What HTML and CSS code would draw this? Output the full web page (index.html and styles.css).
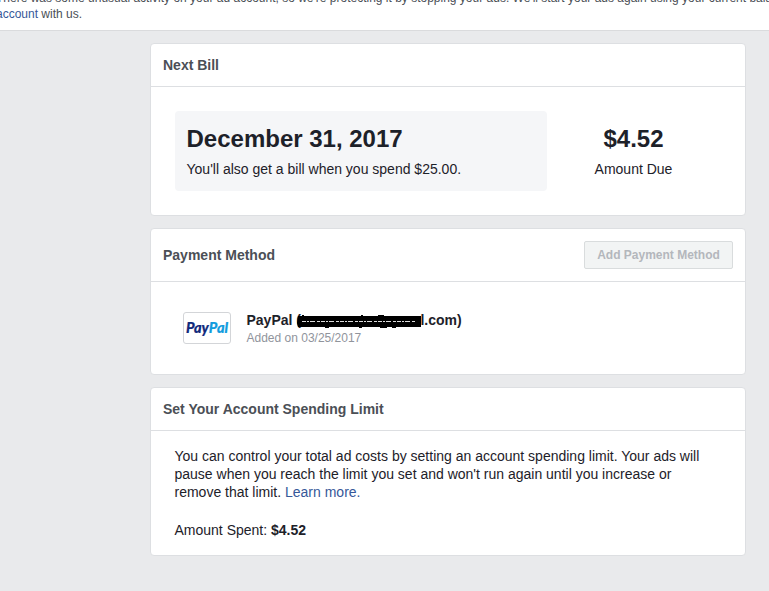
FILE: index.html
```html
<!DOCTYPE html>
<html lang="en">
<head>
    <meta charset="UTF-8">
    <meta name="viewport" content="width=device-width, initial-scale=1.0">
    <title>Billing</title>
    <link rel="stylesheet" href="styles.css">
</head>
<body>
    <div class="notice">
        <p>There was some unusual activity on your ad account, so we're protecting it by stopping your ads. We'll start your ads again using your current balance<br><a href="#">account</a> with us.</p>
    </div>

    <main class="billing">
        <section class="card">
            <header class="card-header">
                <h2>Next Bill</h2>
            </header>
            <div class="card-body bill">
                <div class="bill-date">
                    <div class="big">December 31, 2017</div>
                    <div class="small">You'll also get a bill when you spend $25.00.</div>
                </div>
                <div class="bill-amount">
                    <div class="big">$4.52</div>
                    <div class="small">Amount Due</div>
                </div>
            </div>
        </section>

        <section class="card">
            <header class="card-header with-button">
                <h2>Payment Method</h2>
                <button type="button" disabled>Add Payment Method</button>
            </header>
            <div class="card-body method">
                <div class="paypal-logo"><span class="pay">Pay</span><span class="pal">Pal</span></div>
                <div class="method-info">
                    <div class="method-name">
                        <span>PayPal (</span>
                        <svg class="redacted" width="124" height="14" viewBox="0 0 124 14">
                            <path d="M1 2H124V13H1L0 9Z" fill="#000"/>
                            <path d="M28 13.5h4M62 13.5h3M83 13.5h7M95 13.5h4M5 1.5h2M64 1.5h2M81 1.5h6" stroke="#000" stroke-width="1"/>
                            <path d="M5 7.5H119" stroke="#ddd" stroke-width="1" stroke-dasharray="4 1 2 1 5 2 3 1"/>
                        </svg>
                        <span>l.com)</span>
                    </div>
                    <div class="method-added">Added on 03/25/2017</div>
                </div>
            </div>
        </section>

        <section class="card">
            <header class="card-header">
                <h2>Set Your Account Spending Limit</h2>
            </header>
            <div class="card-body limit">
                <p>You can control your total ad costs by setting an account spending limit. Your ads will pause when you reach the limit you set and won't run again until you increase or remove that limit. <a href="#">Learn more.</a></p>
                <p>Amount Spent: <strong>$4.52</strong></p>
            </div>
        </section>
    </main>
</body>
</html>
```

FILE: styles.css
```css
* {
    box-sizing: border-box;
}

body {
    margin: 0;
    height: 591px;
    overflow: hidden;
    background-color: #e9eaec;
    color: #1d2129;
    font-family: "Liberation Sans", Arial, sans-serif;
    font-size: 14px;
    line-height: 18px;
}

h2,
p {
    margin: 0;
}

a {
    color: #365899;
    text-decoration: none;
}

.notice {
    display: flex;
    align-items: flex-end;
    height: 31px;
    padding-bottom: 8px;
    background-color: #fff;
    border-bottom: 1px solid #dadbdd;
    color: #4b4f56;
    font-size: 12px;
    line-height: 16px;
    white-space: nowrap;
    overflow: hidden;
}

.notice p {
    margin-left: -4px;
}

.billing {
    display: flex;
    flex-direction: column;
    gap: 12px;
    width: 596px;
    margin: 12px 0 0 150px;
}

.card {
    background-color: #fff;
    border: 1px solid #dddfe2;
    border-radius: 4px;
}

.card-header {
    display: flex;
    align-items: center;
    justify-content: space-between;
    height: 43px;
    padding: 0 12px;
    border-bottom: 1px solid #dddfe2;
}

.card-header.with-button {
    height: 53px;
}

.card-header h2 {
    color: #4b4f56;
    font-size: 14px;
    line-height: 18px;
}

button {
    width: 149px;
    height: 28px;
    padding: 0;
    background-color: #f2f4f4;
    border: 1px solid #d9dcdd;
    border-radius: 2px;
    color: #b4b7bc;
    font-family: inherit;
    font-size: 12px;
    font-weight: bold;
}

.card-body {
    padding: 24px;
}

.bill {
    display: flex;
}

.bill-date {
    width: 372px;
    height: 80px;
    padding: 12px 12px 12px 11.5px;
    background-color: #f5f6f8;
    border-radius: 4px;
}

.bill-amount {
    flex: 1;
    padding: 12px 1px 0 0;
    text-align: center;
}

.big {
    font-size: 24px;
    font-weight: bold;
    line-height: 32px;
}

.small {
    margin-top: 5px;
}

.method {
    display: flex;
    gap: 15.5px;
    height: 92px;
    padding: 30px 32px;
}

.paypal-logo {
    display: flex;
    align-items: center;
    justify-content: center;
    width: 48px;
    height: 32px;
    border: 1px solid #d3d5d8;
    border-radius: 3px;
    font-family: Lato, sans-serif;
    font-size: 14.5px;
    font-weight: 900;
    font-style: italic;
    -webkit-text-stroke: 0.2px;
}

.pay {
    color: #10297c;
}

.pal {
    color: #129cde;
}

.method-name {
    display: flex;
    align-items: center;
    font-weight: bold;
    line-height: 17px;
}

.redacted {
    margin: 0 -1px 0 -3.5px;
}

.method-added {
    color: #90949c;
    font-size: 12px;
}

.limit {
    padding: 16px 24px 16px 23.5px;
}

.limit p + p {
    margin-top: 20px;
}
```
